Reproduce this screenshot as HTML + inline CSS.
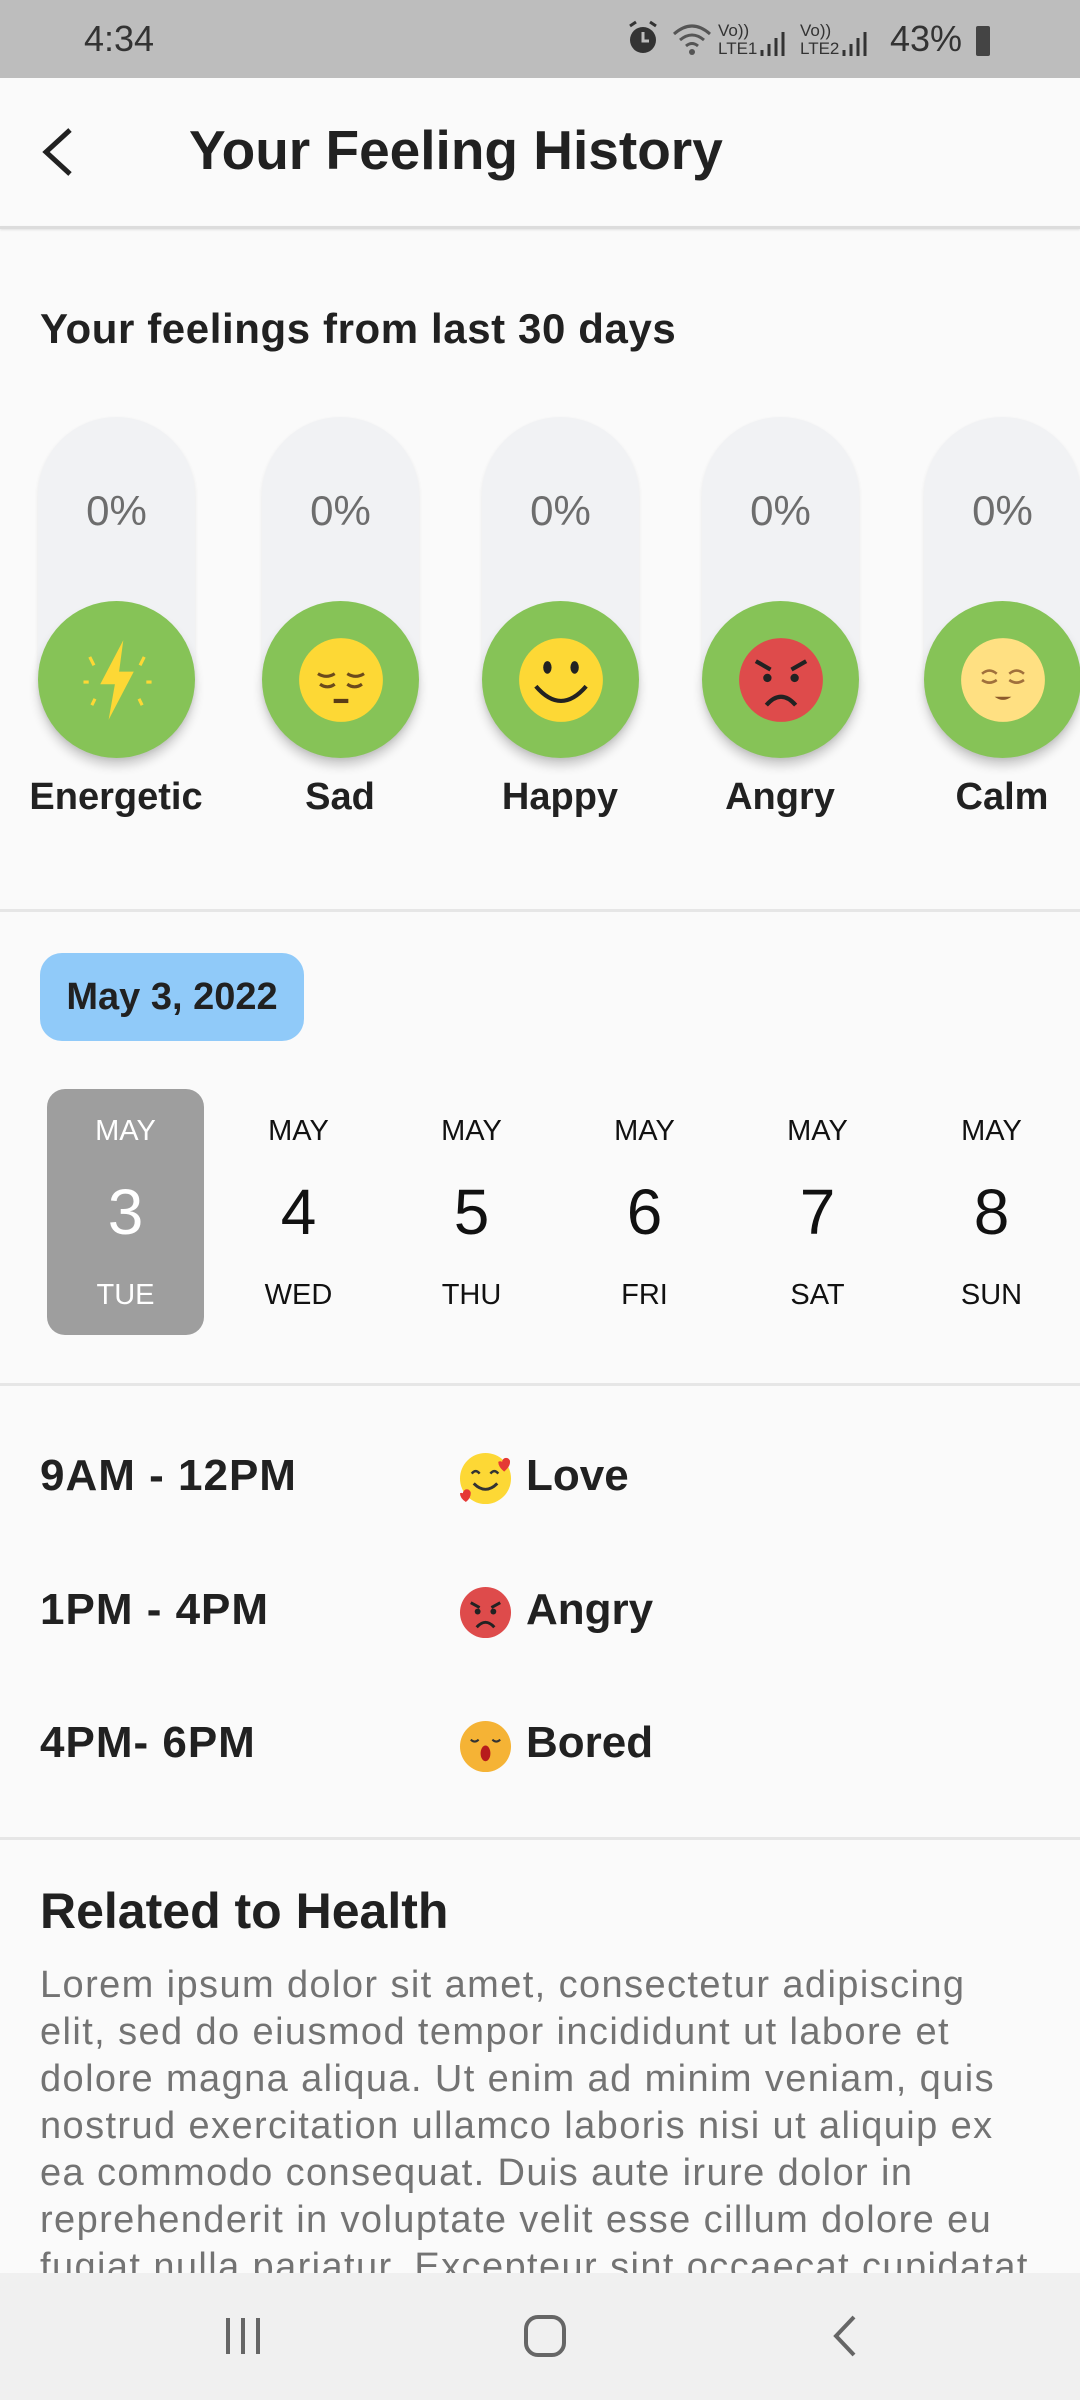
<!DOCTYPE html>
<html><head><meta charset="utf-8"><style>
*{margin:0;padding:0;box-sizing:border-box}
body{width:1080px;height:2400px;background:#fafafa;font-family:"Liberation Sans",sans-serif;color:#212121;position:relative;overflow:hidden}
.a{position:absolute}
.hr{position:absolute;left:0;width:1080px;height:3px;background:#e6e6e6}
.pill{position:absolute;top:417px;width:157px;height:341px;border-radius:79px;background:#f1f2f4;box-shadow:0 2px 4px rgba(0,0,0,.08)}
.pct{position:absolute;top:70px;width:100%;text-align:center;font-size:42px;color:#6d6d6d}
.circ{position:absolute;left:0;bottom:0;width:157px;height:157px;border-radius:50%;background:#86c357;box-shadow:0 8px 10px rgba(0,0,0,.18);display:flex;align-items:center;justify-content:center}
.lbl{position:absolute;top:776px;width:220px;text-align:center;font-size:38px;font-weight:bold}
.day{position:absolute;top:1089px;width:157px;height:246px;text-align:center;color:#111}
.day .m{position:absolute;top:26px;width:100%;font-size:29px}
.day .n{position:absolute;top:86px;width:100%;font-size:64px}
.day .w{position:absolute;top:190px;width:100%;font-size:29px}
.row{position:absolute;left:40px;font-size:44px;font-weight:bold;letter-spacing:1px}
.em{position:absolute;left:459px;width:53px;height:53px}
.fl{position:absolute;left:526px;font-size:44px;font-weight:bold}
p{position:absolute;left:40px;top:1962px;width:1000px;font-size:38px;line-height:47px;color:#737373;letter-spacing:1.4px}
</style></head><body>
<div class="a" style="left:0;top:0;width:1080px;height:78px;background:#bdbdbd"></div>
<div class="a" style="left:84px;top:18px;font-size:36px;color:#333">4:34</div>
<svg class="a" style="left:626px;top:20px" width="34" height="38"><circle cx="17" cy="20" r="13" fill="#333"/><path d="M4 6l6-4M30 6l-6-4" stroke="#333" stroke-width="3"/><path d="M17 12v9h6" stroke="#bdbdbd" stroke-width="3" fill="none"/></svg>
<svg class="a" style="left:672px;top:22px" width="40" height="36"><path d="M2 12q18-16 36 0M8 18q12-10 24 0M14 24q6-5 12 0" stroke="#555" stroke-width="3" fill="none"/><circle cx="20" cy="30" r="3" fill="#555"/></svg>
<div class="a" style="left:718px;top:22px;font-size:17px;color:#333;line-height:18px">Vo))<br>LTE1</div>
<svg class="a" style="left:758px;top:30px" width="30" height="28"><path d="M4 26v-6M11 26v-12M18 26v-18M25 26v-24" stroke="#333" stroke-width="3"/></svg>
<div class="a" style="left:800px;top:22px;font-size:17px;color:#333;line-height:18px">Vo))<br>LTE2</div>
<svg class="a" style="left:840px;top:30px" width="30" height="28"><path d="M4 26v-6M11 26v-12M18 26v-18M25 26v-24" stroke="#333" stroke-width="3"/></svg>
<div class="a" style="left:890px;top:18px;font-size:36px;color:#333">43%</div>
<div class="a" style="left:976px;top:26px;width:14px;height:30px;background:#444;border-radius:2px"></div>
<svg class="a" style="left:38px;top:126px" width="40" height="52"><path d="M32 4 L8 26 L32 48" fill="none" stroke="#212121" stroke-width="5"/></svg>
<div class="a" style="left:189px;top:118px;font-size:55px;font-weight:bold">Your Feeling History</div>
<div class="hr" style="top:226px;background:#dcdcdc;box-shadow:0 1px 2px rgba(0,0,0,.1)"></div>
<div class="a" style="left:40px;top:305px;font-size:42px;font-weight:bold;letter-spacing:0.6px">Your feelings from last 30 days</div>

<div class="pill" style="left:38px"><div class="pct">0%</div><div class="circ"><svg width="88" height="88" viewBox="0 0 84 84"><path d="M48 4 L26 46 H40 L34 80 L58 34 H44 Z" fill="#fdd835"/><g stroke="#fdd835" stroke-width="3"><path d="M16 20 l4 8M68 20l-4 8M10 44h5M70 44h5M18 66l3-6M66 66l-3-6"/></g></svg></div></div>
<div class="pill" style="left:262px"><div class="pct">0%</div><div class="circ"><svg width="88" height="88" viewBox="0 0 84 84"><circle cx="42" cy="42" r="40" fill="#fdd835"/><path d="M20 36q8 5 16 0M48 36q8 5 16 0M22 46q7 5 14 0M48 46q7 5 14 0" stroke="#6b4a1c" stroke-width="3" fill="none"/><rect x="35" y="60" width="14" height="4" fill="#5a3d16"/></svg></div></div>
<div class="pill" style="left:482px"><div class="pct">0%</div><div class="circ"><svg width="88" height="88" viewBox="0 0 84 84"><circle cx="42" cy="42" r="40" fill="#fdd835"/><ellipse cx="29" cy="30" rx="4" ry="6" fill="#222"/><ellipse cx="55" cy="30" rx="4" ry="6" fill="#222"/><path d="M18 48q24 28 48 0" stroke="#222" stroke-width="4" fill="none"/></svg></div></div>
<div class="pill" style="left:702px"><div class="pct">0%</div><div class="circ"><svg width="88" height="88" viewBox="0 0 84 84"><circle cx="42" cy="42" r="40" fill="#de4b4b"/><path d="M18 24l14 8M66 24l-14 8" stroke="#222" stroke-width="4"/><circle cx="29" cy="40" r="4" fill="#222"/><circle cx="55" cy="40" r="4" fill="#222"/><path d="M28 66q14-16 28 0" stroke="#222" stroke-width="4" fill="none"/></svg></div></div>
<div class="pill" style="left:924px"><div class="pct">0%</div><div class="circ"><svg width="88" height="88" viewBox="0 0 84 84"><circle cx="42" cy="42" r="40" fill="#ffe082"/><path d="M22 36q7-6 14 0M48 36q7-6 14 0M22 42q7 5 14 0M48 42q7 5 14 0" stroke="#a0703c" stroke-width="2.5" fill="none"/><path d="M34 58q8 6 16 0z" fill="#8d5a2b"/></svg></div></div>
<div class="lbl" style="left:6px">Energetic</div>
<div class="lbl" style="left:230px">Sad</div>
<div class="lbl" style="left:450px">Happy</div>
<div class="lbl" style="left:670px">Angry</div>
<div class="lbl" style="left:892px">Calm</div>

<div class="hr" style="top:909px"></div>
<div class="a" style="left:40px;top:953px;width:264px;height:88px;border-radius:22px;background:#90caf9;font-size:38px;font-weight:bold;text-align:center;line-height:88px">May 3, 2022</div>
<div class="day" style="left:47px;background:#9e9e9e;border-radius:18px;color:#fff"><div class="m">MAY</div><div class="n">3</div><div class="w">TUE</div></div>
<div class="day" style="left:220px"><div class="m">MAY</div><div class="n">4</div><div class="w">WED</div></div>
<div class="day" style="left:393px"><div class="m">MAY</div><div class="n">5</div><div class="w">THU</div></div>
<div class="day" style="left:566px"><div class="m">MAY</div><div class="n">6</div><div class="w">FRI</div></div>
<div class="day" style="left:739px"><div class="m">MAY</div><div class="n">7</div><div class="w">SAT</div></div>
<div class="day" style="left:913px"><div class="m">MAY</div><div class="n">8</div><div class="w">SUN</div></div>
<div class="hr" style="top:1383px"></div>

<div class="row" style="top:1451px">9AM - 12PM</div>
<svg class="em" style="top:1452px" viewBox="0 0 54 54"><circle cx="27" cy="27" r="26" fill="#fdd835"/><path d="M13 22q4-5 8 0M32 22q4-5 8 0" stroke="#333" stroke-width="2.5" fill="none"/><path d="M15 32q12 12 24 0" stroke="#333" stroke-width="3" fill="none"/><path d="M44 10a4 4 0 0 1 8 0q0 5-6 10q-6-5-6-10a4 4 0 0 1 4 0z" fill="#e53935"/><path d="M4 42a4 4 0 0 1 8 0q0 5-5 9q-6-4-6-9a4 4 0 0 1 3 0z" fill="#e53935"/></svg>
<div class="fl" style="top:1451px">Love</div>
<div class="row" style="top:1585px">1PM - 4PM</div>
<svg class="em" style="top:1586px" viewBox="0 0 54 54"><circle cx="27" cy="27" r="26" fill="#de4b4b"/><path d="M12 17l9 5M42 17l-9 5" stroke="#222" stroke-width="3"/><circle cx="19" cy="26" r="3" fill="#222"/><circle cx="35" cy="26" r="3" fill="#222"/><path d="M18 42q9-10 18 0" stroke="#222" stroke-width="3" fill="none"/></svg>
<div class="fl" style="top:1585px">Angry</div>
<div class="row" style="top:1718px">4PM- 6PM</div>
<svg class="em" style="top:1720px" viewBox="0 0 54 54"><circle cx="27" cy="27" r="26" fill="#f5b335"/><path d="M12 20q4 4 8 0M34 20q4 4 8 0" stroke="#333" stroke-width="2" fill="none"/><ellipse cx="27" cy="34" rx="5" ry="8" fill="#b71c1c"/></svg>
<div class="fl" style="top:1718px">Bored</div>
<div class="hr" style="top:1837px"></div>

<div class="a" style="left:40px;top:1882px;font-size:50px;font-weight:bold">Related to Health</div>
<p>Lorem ipsum dolor sit amet, consectetur adipiscing elit, sed do eiusmod tempor incididunt ut labore et dolore magna aliqua. Ut enim ad minim veniam, quis nostrud exercitation ullamco laboris nisi ut aliquip ex ea commodo consequat. Duis aute irure dolor in reprehenderit in voluptate velit esse cillum dolore eu fugiat nulla pariatur. Excepteur sint occaecat cupidatat non proident</p>

<div class="a" style="left:0;top:2273px;width:1080px;height:127px;background:#f0f0f0"></div>
<svg class="a" style="left:222px;top:2316px" width="44" height="40"><path d="M6 2v36M21 2v36M36 2v36" stroke="#666" stroke-width="4"/></svg>
<svg class="a" style="left:523px;top:2314px" width="44" height="44"><rect x="3" y="3" width="38" height="38" rx="12" fill="none" stroke="#666" stroke-width="4"/></svg>
<svg class="a" style="left:830px;top:2314px" width="30" height="44"><path d="M24 3L6 22l18 19" fill="none" stroke="#666" stroke-width="4"/></svg>
</body></html>
